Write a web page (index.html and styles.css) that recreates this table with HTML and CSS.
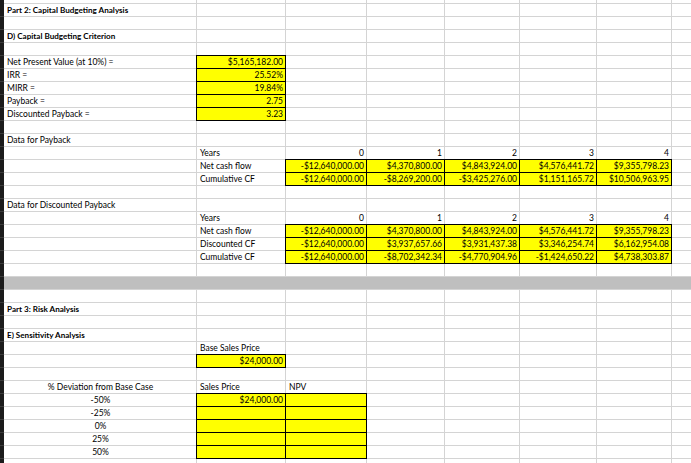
FILE: index.html
```html
<!DOCTYPE html>
<html lang="en">
<head>
<meta charset="utf-8">
<title>Capital Budgeting Analysis</title>
<link rel="stylesheet" href="styles.css">
</head>
<body>
<div class="sheet">
  <div class="strip"></div>
  <div class="wrap">
    <table class="grid">
      <colgroup>
        <col class="ca"><col class="cb"><col class="cc"><col class="cd"><col class="ce"><col class="cf"><col class="cg"><col class="ch">
      </colgroup>
      <tr class="part"><td></td><td></td><td></td><td></td><td></td><td></td><td></td><td></td></tr>
      <tr><td class="b">Part 2: Capital Budgeting Analysis</td><td></td><td></td><td></td><td></td><td></td><td></td><td></td></tr>
      <tr><td></td><td></td><td></td><td></td><td></td><td></td><td></td><td></td></tr>
      <tr><td class="b">D) Capital Budgeting Criterion</td><td></td><td></td><td></td><td></td><td></td><td></td><td></td></tr>
      <tr><td></td><td></td><td></td><td></td><td></td><td></td><td></td><td></td></tr>
      <tr><td>Net Present Value (at 10%) =</td><td class="y r">$5,165,182.00</td><td></td><td></td><td></td><td></td><td></td><td></td></tr>
      <tr><td>IRR =</td><td class="y r">25.52%</td><td></td><td></td><td></td><td></td><td></td><td></td></tr>
      <tr><td>MIRR =</td><td class="y r">19.84%</td><td></td><td></td><td></td><td></td><td></td><td></td></tr>
      <tr><td>Payback =</td><td class="y r">2.75</td><td></td><td></td><td></td><td></td><td></td><td></td></tr>
      <tr><td>Discounted Payback =</td><td class="y r">3.23</td><td></td><td></td><td></td><td></td><td></td><td></td></tr>
      <tr><td></td><td></td><td></td><td></td><td></td><td></td><td></td><td></td></tr>
      <tr><td>Data for Payback</td><td></td><td></td><td></td><td></td><td></td><td></td><td></td></tr>
      <tr><td></td><td>Years</td><td class="r">0</td><td class="r">1</td><td class="r">2</td><td class="r">3</td><td class="r">4</td><td></td></tr>
      <tr><td></td><td>Net cash flow</td><td class="y r">-$12,640,000.00</td><td class="y r">$4,370,800.00</td><td class="y r">$4,843,924.00</td><td class="y r">$4,576,441.72</td><td class="y r">$9,355,798.23</td><td></td></tr>
      <tr><td></td><td>Cumulative CF</td><td class="y r">-$12,640,000.00</td><td class="y r">-$8,269,200.00</td><td class="y r">-$3,425,276.00</td><td class="y r">$1,151,165.72</td><td class="y r">$10,506,963.95</td><td></td></tr>
      <tr><td></td><td></td><td></td><td></td><td></td><td></td><td></td><td></td></tr>
      <tr><td>Data for Discounted Payback</td><td></td><td></td><td></td><td></td><td></td><td></td><td></td></tr>
      <tr><td></td><td>Years</td><td class="r">0</td><td class="r">1</td><td class="r">2</td><td class="r">3</td><td class="r">4</td><td></td></tr>
      <tr><td></td><td>Net cash flow</td><td class="y r">-$12,640,000.00</td><td class="y r">$4,370,800.00</td><td class="y r">$4,843,924.00</td><td class="y r">$4,576,441.72</td><td class="y r">$9,355,798.23</td><td></td></tr>
      <tr><td></td><td>Discounted CF</td><td class="y r">-$12,640,000.00</td><td class="y r">$3,937,657.66</td><td class="y r">$3,931,437.38</td><td class="y r">$3,346,254.74</td><td class="y r">$6,162,954.08</td><td></td></tr>
      <tr><td></td><td>Cumulative CF</td><td class="y r">-$12,640,000.00</td><td class="y r">-$8,702,342.34</td><td class="y r">-$4,770,904.96</td><td class="y r">-$1,424,650.22</td><td class="y r">$4,738,303.87</td><td></td></tr>
      <tr><td></td><td></td><td></td><td></td><td></td><td></td><td></td><td></td></tr>
      <tr><td class="band" colspan="8"></td></tr>
      <tr><td></td><td></td><td></td><td></td><td></td><td></td><td></td><td></td></tr>
      <tr><td class="b">Part 3: Risk Analysis</td><td></td><td></td><td></td><td></td><td></td><td></td><td></td></tr>
      <tr><td></td><td></td><td></td><td></td><td></td><td></td><td></td><td></td></tr>
      <tr><td class="b">E) Sensitivity Analysis</td><td></td><td></td><td></td><td></td><td></td><td></td><td></td></tr>
      <tr><td></td><td>Base Sales Price</td><td></td><td></td><td></td><td></td><td></td><td></td></tr>
      <tr><td></td><td class="y r">$24,000.00</td><td></td><td></td><td></td><td></td><td></td><td></td></tr>
      <tr><td></td><td></td><td></td><td></td><td></td><td></td><td></td><td></td></tr>
      <tr><td class="c">% Deviation from Base Case</td><td>Sales Price</td><td>NPV</td><td></td><td></td><td></td><td></td><td></td></tr>
      <tr><td class="c">-50%</td><td class="y r">$24,000.00</td><td class="y"></td><td></td><td></td><td></td><td></td><td></td></tr>
      <tr><td class="c">-25%</td><td class="y"></td><td class="y"></td><td></td><td></td><td></td><td></td><td></td></tr>
      <tr><td class="c">0%</td><td class="y"></td><td class="y"></td><td></td><td></td><td></td><td></td><td></td></tr>
      <tr><td class="c">25%</td><td class="y"></td><td class="y"></td><td></td><td></td><td></td><td></td><td></td></tr>
      <tr><td class="c">50%</td><td class="y"></td><td class="y"></td><td></td><td></td><td></td><td></td><td></td></tr>
      <tr><td></td><td></td><td></td><td></td><td></td><td></td><td></td><td></td></tr>
    </table>
  </div>
</div>
</body>
</html>
```
FILE: styles.css
```css
html, body {
  margin: 0;
  padding: 0;
  background: #fff;
}

.sheet {
  display: flex;
  width: 691px;
  height: 463px;
  overflow: hidden;
}

.strip {
  flex: none;
  width: 4px;
  background: repeating-linear-gradient(to bottom, #1b1b1b 0, #1b1b1b 12px, #3a3a3a 12px, #3a3a3a 13px);
  background-position: 0 4px;
}

.wrap {
  flex: 1;
  overflow: hidden;
}

.grid {
  margin: -1px 0 0 -1px;
  border-collapse: separate;
  border-spacing: 1px;
  background: #d4d4d4;
  table-layout: fixed;
  width: 770px;
  font-family: Lato, "Open Sans", sans-serif;
  font-size: 8.5px;
  color: #000;
}

.ca { width: 192px; }
.cb { width: 88px; }
.cc { width: 80px; }
.cd { width: 77px; }
.ce { width: 74px; }
.cf { width: 76px; }
.cg { width: 74px; }
.ch { width: 100px; }

.grid td {
  background: #fff;
  height: 12px;
  padding: 0 2px 0 3px;
  line-height: 11px;
  vertical-align: bottom;
  white-space: nowrap;
  overflow: hidden;
}

.grid .part td {
  height: 3px;
  line-height: 3px;
}

.grid td.b {
  font-weight: 700;
  font-size: 8.1px;
}
.grid td.r { text-align: right; padding-left: 0; }
.grid td.c { text-align: center; }

.grid td.y {
  background: #ffff00;
  outline: 1px solid #000;
}

.grid td.band {
  background: #bfbfbf;
}
```
